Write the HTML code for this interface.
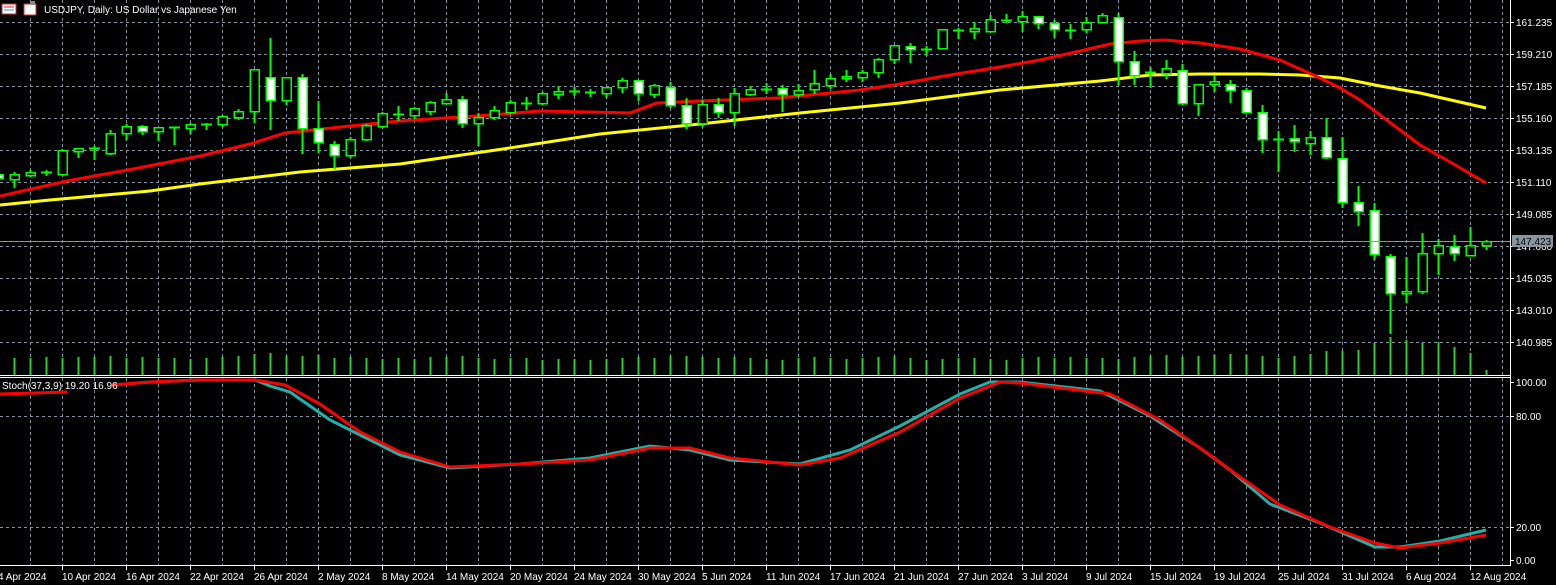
<!DOCTYPE html>
<html><head><meta charset="utf-8"><style>
html,body{margin:0;padding:0;background:#000;width:1556px;height:585px;overflow:hidden}
svg{display:block}
text{font-family:"Liberation Sans",sans-serif;font-size:10px;fill:#fff}
</style></head><body>
<svg id="s" width="1556" height="585" xmlns="http://www.w3.org/2000/svg" shape-rendering="crispEdges">
<rect width="1556" height="585" fill="#000"/>
<g id="grid" stroke="#8391a3" stroke-width="1" stroke-dasharray="3,3"></g>
<g id="vol" stroke="#32cd32" stroke-width="2"></g>
<g id="ma" fill="none" stroke-width="3" shape-rendering="auto"></g>
<g id="cdl"></g>
<g id="stoch" fill="none" stroke-width="3" shape-rendering="auto"></g>
<line x1="0" y1="241.5" x2="1510" y2="241.5" stroke="#8c96a0" stroke-width="1"/>
<line x1="0" y1="375.5" x2="1510" y2="375.5" stroke="#fff"/>
<line x1="0" y1="377.5" x2="1510" y2="377.5" stroke="#fff"/>
<line x1="1510.5" y1="0" x2="1510.5" y2="566" stroke="#fff"/>
<line x1="0" y1="565.5" x2="1511" y2="565.5" stroke="#fff"/>
<g id="ax"></g>
<rect x="1512" y="235" width="41" height="12" fill="#8a95a0"/>
<text x="1515" y="245" style="fill:#000">147.423</text>
<g>
<rect x="2" y="4" width="14" height="10" fill="#fff" stroke="#d03030"/>
<line x1="4" y1="7" x2="14" y2="7" stroke="#d03030"/><line x1="4" y1="10" x2="14" y2="10" stroke="#2aa"/>
<rect x="24" y="4" width="12" height="11" fill="#fff" stroke="#d03030"/>
<rect x="30" y="1" width="5" height="4" fill="#888"/>
<text x="44" y="13">USDJPY, Daily:  US Dollar vs Japanese Yen</text>
<text x="2" y="389">Stoch(37,3,9) 19.20 16.96</text>
</g>
</svg>
<script>
const NS="http://www.w3.org/2000/svg";
function el(p,t,a){const e=document.createElementNS(NS,t);for(const k in a)e.setAttribute(k,a[k]);document.getElementById(p).appendChild(e);return e;}
// grid
for(let x=30;x<1510;x+=32){el('grid','line',{x1:x+.5,y1:0,x2:x+.5,y2:565});}
const py=[22,54,86,118,150,182,214,246,278,310,342];
const pl=["161.235","159.210","157.185","155.160","153.135","151.110","149.085","147.060","145.035","143.010","140.985"];
py.forEach((y,i)=>{el('grid','line',{x1:0,y1:y+.5,x2:1510,y2:y+.5});el('ax','line',{x1:1510,y1:y+.5,x2:1514,y2:y+.5,stroke:'#fff'});const t=el('ax','text',{x:1516,y:y+4});t.textContent=pl[i];});
[[416,"80.00"],[527,"20.00"]].forEach(a=>{el('grid','line',{x1:0,y1:a[0]+.5,x2:1510,y2:a[0]+.5});});
[[382,"100.00"],[416,"80.00"],[527,"20.00"],[560,"0.00"]].forEach(a=>{el('ax','line',{x1:1510,y1:a[0]+.5,x2:1514,y2:a[0]+.5,stroke:'#fff'});const t=el('ax','text',{x:1516,y:a[0]+4});t.textContent=a[1];});
const dates=["4 Apr 2024","10 Apr 2024","16 Apr 2024","22 Apr 2024","26 Apr 2024","2 May 2024","8 May 2024","14 May 2024","20 May 2024","24 May 2024","30 May 2024","5 Jun 2024","11 Jun 2024","17 Jun 2024","21 Jun 2024","27 Jun 2024","3 Jul 2024","9 Jul 2024","15 Jul 2024","19 Jul 2024","25 Jul 2024","31 Jul 2024","6 Aug 2024","12 Aug 2024"];
dates.forEach((d,i)=>{const x=-2+64*i;el('ax','line',{x1:x+.5,y1:566,x2:x+.5,y2:570,stroke:'#fff'});const t=el('ax','text',{x:x,y:580});t.textContent=d;});
// candles: x, o, c, h, l  (y pixels; white = o<c i.e. bear)
const C=[[-2,174,178,172,180],[14,179,174,172,187],[30,175,172,170,176],[46,172,172,170,175],[62,174,150,149,175],[78,151,148,148,157],[94,148,148,146,159],[110,153,133,130,154],[126,133,126,124,139],[142,126,131,125,134],[158,131,127,127,140],[174,127,127,127,144],[190,128,124,123,133],[206,124,124,123,129],[222,124,116,115,126],[238,117,111,109,119],[254,111,69,69,122],[270,77,100,38,129],[286,100,77,77,104],[302,77,128,74,153],[318,128,142,101,152],[334,144,155,141,168],[350,155,139,137,157],[366,139,125,124,140],[382,126,113,112,127],[398,114,114,106,120],[414,115,108,107,118],[430,111,102,101,114],[446,103,99,93,103],[462,99,123,96,127],[478,123,117,113,145],[494,117,110,106,119],[510,112,102,100,113],[526,103,103,97,109],[542,103,93,92,104],[558,94,91,86,98],[574,91,91,87,95],[590,92,92,89,96],[606,93,87,87,97],[622,87,80,78,92],[638,80,93,80,100],[654,94,85,84,97],[670,87,105,82,107],[686,105,123,98,128],[702,123,104,100,126],[718,104,112,98,117],[734,112,93,88,125],[750,94,89,86,95],[766,89,89,83,93],[782,88,94,85,111],[798,94,90,84,96],[814,89,83,70,93],[830,85,78,74,88],[846,78,76,70,81],[862,77,72,70,81],[878,72,59,58,77],[894,59,45,45,63],[910,46,49,43,62],[926,49,49,46,55],[942,48,29,29,48],[958,30,30,28,38],[974,31,28,22,38],[990,31,19,15,31],[1006,20,20,14,22],[1022,21,16,11,31],[1038,16,23,16,28],[1054,23,29,20,37],[1070,30,30,24,38],[1086,29,22,17,32],[1102,22,15,13,22],[1118,17,61,13,84],[1134,61,75,51,84],[1150,72,72,67,87],[1166,73,68,60,78],[1182,70,103,64,104],[1198,103,84,84,115],[1214,84,81,75,91],[1230,84,90,80,102],[1246,90,112,88,112],[1262,112,139,105,152],[1278,139,139,131,171],[1294,138,141,125,151],[1310,143,137,131,154],[1326,137,157,118,158],[1342,158,202,137,207],[1358,202,211,186,225],[1374,210,254,203,259],[1390,256,293,254,333],[1406,293,291,257,302],[1422,291,253,233,293],[1438,253,245,239,274],[1454,246,253,235,260],[1470,255,245,227,255],[1486,245,241,240,249]];
const G="#00ff00";
C.forEach(c=>{const [x,o,cl,h,l]=c;const top=Math.min(o,cl),bot=Math.max(o,cl);
el('cdl','line',{x1:x+.5,y1:h,x2:x+.5,y2:l+1,stroke:G,'stroke-width':2});
if(bot-top<1){el('cdl','line',{x1:x-5,y1:top+.5,x2:x+6,y2:top+.5,stroke:G,'stroke-width':2});}
else el('cdl','rect',{x:x-4,y:top+.5,width:9,height:bot-top,fill:o<cl?'#fff':'#000',stroke:G,'stroke-width':1.5});
// volume
});
const vt=[360,358,358,357,358,357,357,356,358,357,358,358,359,358,357,356,354,353,356,356,355,358,357,358,359,358,359,357,357,356,358,359,358,358,360,359,359,360,359,358,357,358,356,356,357,358,357,358,359,360,358,357,358,359,358,357,356,358,360,359,358,358,359,360,358,357,358,357,358,358,359,357,356,355,357,356,355,354,355,356,358,356,354,351,351,350,343,337,340,343,342,347,353,370];
C.forEach((c,i)=>{el('vol','line',{x1:c[0]+.5,y1:vt[i]||358,x2:c[0]+.5,y2:375});});
function path(pts){return pts.map((p,i)=>(i?'L':'M')+p[0]+','+p[1]).join(' ');}
el('ma','path',{d:path([[0,205],[50,200],[150,191],[200,184],[300,172],[400,164],[503,149],[600,134],[700,124],[800,113],[900,103],[1000,90],[1100,81],[1150,75],[1200,74],[1260,74],[1300,75],[1340,78],[1380,86],[1420,93],[1486,108]]),stroke:'#ffff00'});
el('ma','path',{d:path([[0,196],[67,181],[133,169],[200,156],[250,144],[285,133],[350,126],[400,121],[490,115],[540,111],[590,112],[630,113],[657,103],[700,101],[777,98],[800,96],[830,93],[860,90],[900,84],[950,75],[1000,67],[1040,60],[1080,51],[1110,44],[1140,41],[1165,40],[1200,43],[1240,49],[1280,60],[1320,78],[1340,88],[1360,100],[1380,115],[1400,130],[1420,145],[1450,162],[1486,183]]),stroke:'#ff0000'});
// stoch
el('stoch','path',{d:path([[0,394],[67,392]]),stroke:'#ff0000'});
const cy=[[112,385],[150,382],[200,380],[255,380],[270,386],[290,392],[330,420],[400,455],[450,468],[520,464],[590,458],[650,446],[690,450],[730,460],[800,464],[850,450],[900,426],[960,394],[990,382],[1020,382],[1100,391],[1150,416],[1200,448],[1230,470],[1270,504],[1320,523],[1375,547],[1400,547],[1440,541],[1486,530]];
const ry=[[112,385],[150,382],[200,380],[255,380],[285,385],[320,404],[360,432],[400,452],[450,467],[520,464],[590,460],[650,448],[690,448],[730,458],[800,465],[840,458],[900,432],[960,398],[1000,382],[1020,383],[1110,394],[1160,420],[1210,455],[1240,477],[1280,505],[1330,527],[1375,543],[1400,548],[1440,543],[1486,535]];
el('stoch','path',{d:path(cy),stroke:'#20b2aa'});
el('stoch','path',{d:path(ry),stroke:'#ff0000'});
</script>
</body></html>
